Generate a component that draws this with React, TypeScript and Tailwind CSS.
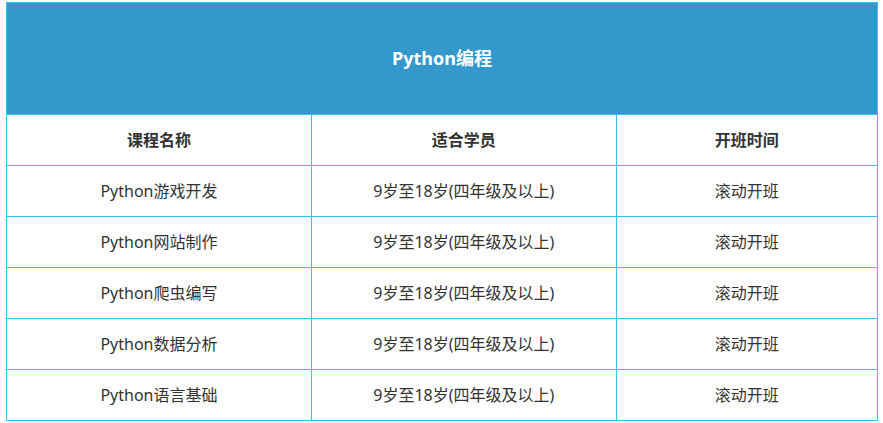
const courses = [
  "Python游戏开发",
  "Python网站制作",
  "Python爬虫编写",
  "Python数据分析",
  "Python语言基础",
];

export default function App() {
  return (
    <div
      className="bg-white pt-[2px] pl-[6px] text-[#333]"
      style={{ fontFamily: '"Noto Sans", "Noto Sans CJK SC", sans-serif' }}
    >
      <table className="w-[872px] border-collapse border border-[#35c3f2] table-fixed text-center">
        <colgroup>
          <col className="w-[35%]" />
          <col className="w-[35%]" />
          <col className="w-[30%]" />
        </colgroup>
        <thead>
          <tr>
            <th
              colSpan={3}
              className="h-[112px] bg-[#3498cc] border border-[#35c3f2] text-white text-[18px] font-bold"
            >
              Python编程
            </th>
          </tr>
          <tr className="h-[51px]">
            <th className="border border-[#35c3f2] text-[16px] font-bold">课程名称</th>
            <th className="border border-[#35c3f2] text-[16px] font-bold">适合学员</th>
            <th className="border border-[#35c3f2] text-[16px] font-bold">开班时间</th>
          </tr>
        </thead>
        <tbody>
          {courses.map((name) => (
            <tr key={name} className="h-[51px] text-[16px]">
              <td className="border border-[#35c3f2]">{name}</td>
              <td className="border border-[#35c3f2]">9岁至18岁(四年级及以上)</td>
              <td className="border border-[#35c3f2]">滚动开班</td>
            </tr>
          ))}
        </tbody>
      </table>
    </div>
  );
}
